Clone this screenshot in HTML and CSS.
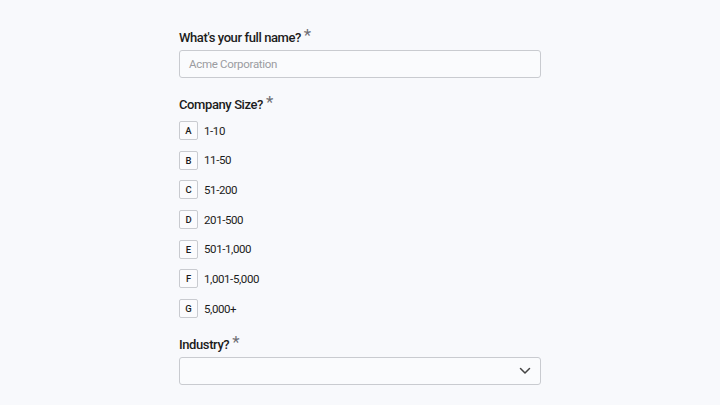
FILE: index.html
```html
<!DOCTYPE html>
<html>
<head>
<meta charset="utf-8">
<link rel="stylesheet" href="styles.css">
</head>
<body>
<form class="form">
  <div class="field">
    <label class="label">What's your full name? <span class="req">*</span></label>
    <div class="input"><span class="placeholder">Acme Corporation</span></div>
  </div>
  <div class="field">
    <label class="label">Company Size? <span class="req">*</span></label>
    <div class="options">
      <div class="option"><span class="key">A</span><span class="opt-text">1-10</span></div>
      <div class="option"><span class="key">B</span><span class="opt-text">11-50</span></div>
      <div class="option"><span class="key">C</span><span class="opt-text">51-200</span></div>
      <div class="option"><span class="key">D</span><span class="opt-text">201-500</span></div>
      <div class="option"><span class="key">E</span><span class="opt-text">501-1,000</span></div>
      <div class="option"><span class="key">F</span><span class="opt-text">1,001-5,000</span></div>
      <div class="option"><span class="key">G</span><span class="opt-text">5,000+</span></div>
    </div>
  </div>
  <div class="field">
    <label class="label">Industry? <span class="req">*</span></label>
    <div class="input select">
      <svg class="chev" width="12" height="8" viewBox="0 0 12 8"><path d="M1.5 1.5 L6 6 L10.5 1.5" fill="none" stroke="#444" stroke-width="1.5" stroke-linecap="round" stroke-linejoin="round"/></svg>
    </div>
  </div>
</form>
</body>
</html>
```
FILE: styles.css
```css
html, body {
  margin: 0;
  padding: 0;
  background: #f8f9fc;
}
body {
  font-family: Roboto, "Noto Sans", sans-serif;
  color: #1b1b1f;
  height: 405px;
  overflow: hidden;
}
.form {
  width: 362px;
  margin: 0 auto;
  padding-top: 26px;
}
.field {
  display: flex;
  flex-direction: column;
  margin-bottom: 15px;
}
.label {
  font-size: 13px;
  font-weight: 500;
  letter-spacing: -0.4px;
  line-height: 20px;
  height: 20px;
  margin-bottom: 4px;
  color: #1c1c20;
}
.req {
  color: #6f6f75;
  font-weight: 400;
  font-size: 17px;
  letter-spacing: 0;
  position: relative;
  top: -1px;
}
.input {
  height: 26px;
  border: 1px solid #c9cbd0;
  border-radius: 3px;
  background: #fafbfd;
  display: flex;
  align-items: center;
  padding: 0 9px;
}
.placeholder {
  font-size: 11.5px;
  letter-spacing: -0.3px;
  color: #9a9ca1;
}
.select {
  justify-content: flex-end;
  padding-right: 9px;
}
.options {
  display: flex;
  flex-direction: column;
  gap: 10.7px;
  margin-top: 4px;
}
.option {
  display: flex;
  align-items: center;
  height: 19px;
}
.key {
  width: 17px;
  height: 17px;
  border: 1px solid #c9cbd0;
  border-radius: 2px;
  background: #fbfbfd;
  font-size: 9.5px;
  font-weight: 500;
  display: flex;
  align-items: center;
  justify-content: center;
  color: #1c1c20;
}
.opt-text {
  font-size: 11.5px;
  letter-spacing: -0.4px;
  margin-left: 6px;
  color: #1c1c20;
}
```
